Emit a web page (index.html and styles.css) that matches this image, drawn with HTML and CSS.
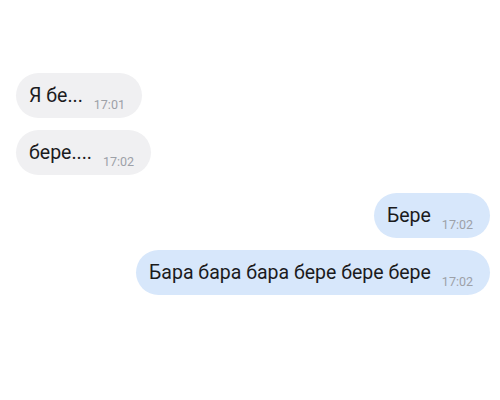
FILE: index.html
```html
<!doctype html>
<html lang="ru">

<head>
	<meta charset="UTF-8">
	<title>Чат</title>
	<link rel="stylesheet" href="styles.css">
</head>

<body>
	<div class="chat">
		<div class="msg in">
			<span class="text">Я бе...</span>
			<span class="time">17:01</span>
		</div>
		<div class="msg in">
			<span class="text">бере....</span>
			<span class="time">17:02</span>
		</div>
		<div class="msg out first-out">
			<span class="text">Бере</span>
			<span class="time">17:02</span>
		</div>
		<div class="msg out">
			<span class="text">Бара бара бара бере бере бере</span>
			<span class="time">17:02</span>
		</div>
	</div>
</body>

</html>
```

FILE: styles.css
```css
body {
	margin: 0;
	background: #fff;
	font-family: Roboto, "Noto Sans", sans-serif;
}

.chat {
	display: flex;
	flex-direction: column;
	gap: 12px;
	padding: 73px 10px 0 16px;
}

.msg {
	display: flex;
	align-items: baseline;
	height: 45px;
	box-sizing: border-box;
	padding: 0 17px 0 13px;
	border-radius: 23px;
	line-height: 45px;
}

.in {
	align-self: flex-start;
	background: #f0f0f2;
}

.out {
	align-self: flex-end;
	background: #d7e7fb;
}

.first-out {
	margin-top: 6px;
}

.text {
	font-size: 19.5px;
	color: #1b1b1d;
}

.time {
	position: relative;
	top: 7px;
	margin-left: 11px;
	font-size: 12.5px;
	color: #9da1a8;
}
```
